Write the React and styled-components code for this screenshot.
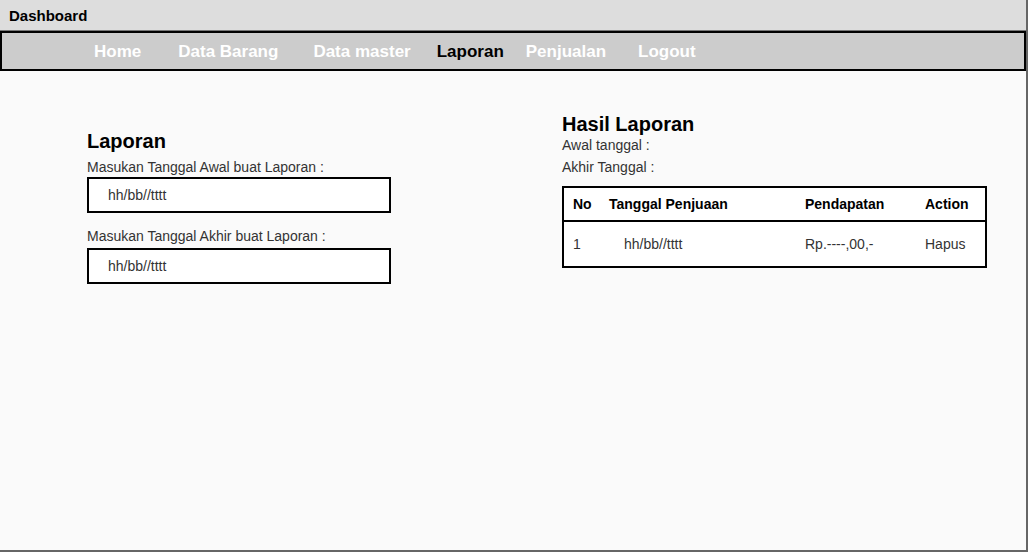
import React from 'react';
import styled, { createGlobalStyle } from 'styled-components';

const navItems = [
	{ label: 'Home', gap: 0 },
	{ label: 'Data Barang', gap: 37 },
	{ label: 'Data master', gap: 35 },
	{ label: 'Laporan', gap: 26, active: true },
	{ label: 'Penjualan', gap: 22 },
	{ label: 'Logout', gap: 32 },
];

const rows = [
	{ no: '1', tanggal: 'hh/bb//tttt', pendapatan: 'Rp.----,00,-', action: 'Hapus' },
];

export default function App() {
	return (
		<>
			<GlobalStyle />
			<Frame>
				<TitleBar>Dashboard</TitleBar>

				<NavBar>
					{navItems.map((item) => (
						<NavItem key={item.label} $gap={item.gap} $active={item.active}>
							{item.label}
						</NavItem>
					))}
				</NavBar>

				<Main>
					{/* form tanggal */}
					<Column $top={58} $width={304}>
						<Heading>Laporan</Heading>
						<Label $bottom={1}>Masukan Tanggal Awal buat Laporan :</Label>
						<DateBox>hh/bb//tttt</DateBox>
						<Label $top={14} $bottom={3}>Masukan Tanggal Akhir buat Laporan :</Label>
						<DateBox>hh/bb//tttt</DateBox>
					</Column>

					{/* hasil */}
					<Column $top={43} $width={425}>
						<Heading $tight>Hasil Laporan</Heading>
						<InfoLine>Awal tanggal :</InfoLine>
						<InfoLine>Akhir Tanggal :</InfoLine>

						<Table>
							<HeaderRow>
								<Cell>No</Cell>
								<Cell>Tanggal Penjuaan</Cell>
								<Cell>Pendapatan</Cell>
								<Cell>Action</Cell>
							</HeaderRow>
							{rows.map((row) => (
								<BodyRow key={row.no}>
									<Cell>{row.no}</Cell>
									<Cell $indent={15}>{row.tanggal}</Cell>
									<Cell>{row.pendapatan}</Cell>
									<Cell>{row.action}</Cell>
								</BodyRow>
							))}
						</Table>
					</Column>
				</Main>
			</Frame>
		</>
	);
}

const GlobalStyle = createGlobalStyle`
	* {
		box-sizing: border-box;
	}

	body {
		margin: 0;
		background: #fafafa;
		font-family: "Liberation Sans", Arial, sans-serif;
	}
`;

const Frame = styled.div`
	width: 1028px;
	height: 552px;
	display: flex;
	flex-direction: column;
	background: #fafafa;
	border-right: 2px solid #666;
	border-bottom: 2px solid #666;
	overflow: hidden;
`;

const TitleBar = styled.div`
	height: 31px;
	line-height: 32px;
	padding-left: 9px;
	background: #dddddd;
	border-bottom: 1px solid #777;
	font-size: 15px;
	font-weight: bold;
	color: #000;
`;

const NavBar = styled.nav`
	height: 40px;
	display: flex;
	align-items: center;
	padding-top: 2px;
	padding-left: 92px;
	background: #cccccc;
	border: 2px solid #000;
`;

const NavItem = styled.span`
	margin-left: ${(p) => p.$gap}px;
	font-size: 17px;
	font-weight: bold;
	line-height: 34px;
	color: ${(p) => (p.$active ? '#000' : '#fff')};
	cursor: pointer;
`;

const Main = styled.main`
	flex: 1;
	display: flex;
	align-items: flex-start;
	gap: 171px;
	padding-left: 87px;
`;

const Column = styled.section`
	width: ${(p) => p.$width}px;
	margin-top: ${(p) => p.$top}px;
	display: flex;
	flex-direction: column;
`;

const Heading = styled.h2`
	margin: 0 0 ${(p) => (p.$tight ? 0 : 5)}px;
	font-size: 20px;
	line-height: ${(p) => (p.$tight ? 20 : 24)}px;
	font-weight: bold;
	color: #000;
`;

const Label = styled.label`
	margin-top: ${(p) => p.$top || 0}px;
	margin-bottom: ${(p) => p.$bottom || 0}px;
	font-size: 14px;
	line-height: 18px;
	color: #333;
`;

const DateBox = styled.div`
	height: 36px;
	padding-left: 19px;
	border: 2px solid #000;
	background: #fff;
	font-size: 14px;
	line-height: 32px;
	color: #333;
`;

const InfoLine = styled.div`
	font-size: 14px;
	line-height: 22px;
	color: #333;
`;

const Table = styled.div`
	margin-top: 8px;
	border: 2px solid #000;
	background: #fff;
`;

const HeaderRow = styled.div`
	display: grid;
	grid-template-columns: 36px 196px 120px 1fr;
	align-items: center;
	height: 34px;
	padding-left: 9px;
	border-bottom: 2px solid #000;
	font-size: 14px;
	font-weight: bold;
	color: #000;
`;

const BodyRow = styled.div`
	display: grid;
	grid-template-columns: 36px 196px 120px 1fr;
	align-items: center;
	height: 44px;
	padding-left: 9px;
	font-size: 14px;
	color: #333;
`;

const Cell = styled.div`
	padding-left: ${(p) => p.$indent || 0}px;
	white-space: nowrap;
`;
